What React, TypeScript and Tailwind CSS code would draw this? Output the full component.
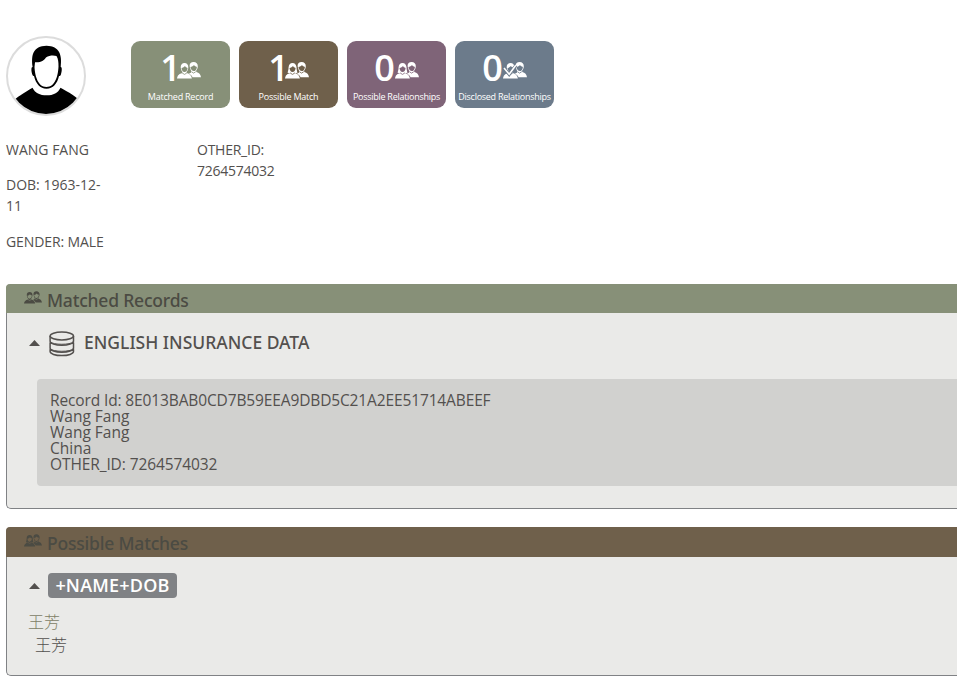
type PeopleProps = { className: string; variant: 'male' | 'female' | 'plain' | 'check' };

function People({ className, variant }: PeopleProps) {
  return (
    <svg viewBox="0 0 24 17" className={className} fill="currentColor">
      <path d="M12.600 4C12.500 1.200 14.100 0 16.600 0c2.600 0 4.300 1.700 4.200 4.300-.1 2-.7 3.400-1.700 4.500l.2 1.200c2.900 1 4.200 2.100 4.700 5.200h-8.500c-.6-1.700-1.700-2.700-3.600-3.500l2.300-1.100.1-1.700c-.7-.7-1.200-2.400-1.700-4.900Z" />
      <path d="M13.400 5c1.600-.2 2.800-1 3.600-1.900.6 1 1.700 1.600 2.900 1.800-.2 2.500-1.500 4.200-3.100 4.200S13.900 7.700 13.400 5Z" className="fill-(--hole)" />
      <path d="M3.700 5.300C3.700 2.600 5.100 1 7.500 1s3.900 1.600 3.800 4.300c-.1 2-.7 3.500-1.700 4.500l.1 1.200c3.200 1 4.700 2.200 5.200 5.600H0c.5-3.400 2-4.600 5.300-5.600l.1-1.200C4.300 8.800 3.900 7.200 3.700 5.300Z" />
      {variant === 'female' || variant === 'plain' ? (
        <path d="M4 4.200c-.4 2.600-.9 4.800-1.400 6.500l2.500.5 1-1.200L5 5Zm7.200 0c.3 2.600.8 4.800 1.300 6.500l-2.500.5-1.100-1.200L10.100 5Z" />
      ) : null}
      <path d="M4.500 6c1.500-.2 2.700-1 3.400-1.900.5.9 1.500 1.500 2.700 1.800-.3 2.400-1.400 4.100-3.100 4.100S4.900 8.500 4.500 6Z" className="fill-(--hole)" />
      <path d="M5.200 11 7.500 12.400 9.800 11M14.600 9.800l1.900 1.300 2.300-1.400" fill="none" className="stroke-(--hole)" strokeWidth="0.8" />
      {variant === 'check' ? (
        <>
          <path d="m1 6.200 5.200 6.200 6.700-9" fill="none" className="stroke-(--hole)" strokeWidth="3.200" />
          <path d="m1 6 5.200 6.200 6.600-9" fill="none" stroke="currentColor" strokeWidth="1.600" />
        </>
      ) : null}
    </svg>
  );
}

function Avatar() {
  return (
    <svg viewBox="0 0 80 80" className="block h-20 w-20">
      <defs>
        <clipPath id="avatar-clip">
          <circle cx="40" cy="40" r="38" />
        </clipPath>
      </defs>
      <circle cx="40" cy="40" r="39" fill="#fff" stroke="#dcdcdc" strokeWidth="2" />
      <g clipPath="url(#avatar-clip)">
        <path d="M6 66c5-5 11-8.500 20.500-14.300C29 57 34 59.300 40.700 59.300S52 57 54.500 51.700C63 56.500 70 60 75 66v14H6Z" />
        <path d="M26.600 31C25.200 30.800 25 34.500 26.300 38.500c.4 1.300 1 1.500 1.700 1.500C29.800 47.500 34 52.700 40.500 52.700S51.300 47.500 53 40c1 0 1.500-.3 1.900-1.500C56.200 34.500 56 30.800 54.700 31c1.500-12-1-20.800-14.200-21.300C27 10 25 19 26.600 31Z" />
        <path d="M29 26.200c6 .4 8.800-1.500 11-4.700 3.500-2.200 7.500-2.500 10.500-1.400 1.800 3.200 2 5.900 2 10.400-.4 9.500-3.500 20.500-12 20.500S29 40 28.500 31Z" fill="#fff" />
      </g>
    </svg>
  );
}

function DatabaseIcon() {
  return (
    <svg viewBox="0 0 26 26" className="h-[26px] w-[26px]" fill="none" stroke="#53504e" strokeWidth="1.500">
      <ellipse cx="12.800" cy="5" rx="11.700" ry="4" />
      <path d="M1.100 5v5.300c0 2.300 5.200 4 11.700 4s11.700-1.700 11.700-4V5M1.100 11.500v5.700c0 2.300 5.200 4 11.700 4s11.700-1.700 11.700-4v-5.700M1.100 18.200v2.400c0 2.300 5.200 4 11.700 4s11.700-1.700 11.700-4v-2.400" />
      <path d="M1.500 10.800c2 3.300 20.600 3.300 22.600 0M1.500 17.800c2 3.300 20.600 3.300 22.600 0" strokeWidth="1" />
    </svg>
  );
}

function Caret() {
  return (
    <svg viewBox="0 0 11 6" className="h-1.5 w-[11px]" fill="#53504e">
      <path d="M0 6 5.500 0 11 6Z" />
    </svg>
  );
}

const stats = [
  { count: 1, label: 'Matched Record', variant: 'male', tone: 'bg-[#879078] [--hole:#879078]', num: 'tracking-[-4px]', tracking: 'tracking-[-0.23px]' },
  { count: 1, label: 'Possible Match', variant: 'female', tone: 'bg-[#6f604b] [--hole:#6f604b]', num: 'tracking-[-4px]', tracking: 'tracking-[-0.23px]' },
  { count: 0, label: 'Possible Relationships', variant: 'plain', tone: 'bg-[#7f6478] [--hole:#7f6478]', num: 'tracking-[0px]', tracking: 'tracking-[-0.27px]' },
  { count: 0, label: 'Disclosed Relationships', variant: 'check', tone: 'bg-[#6c7b8b] [--hole:#6c7b8b]', num: 'tracking-[0px]', tracking: 'tracking-[-0.26px]' },
] as const;

export default function App() {
  return (
    <div className="h-[685px] w-[957px] overflow-hidden bg-white pl-1.5 font-['Open_Sans','Noto_Sans_CJK_SC',sans-serif] text-[#53504e]">
      <header className="flex items-start pt-9">
        <Avatar />
        <div className="mt-[5px] ml-[45px] flex gap-[9px]">
          {stats.map((s) => (
            <div key={s.label} className={`flex h-[67px] w-[99px] flex-col items-center rounded-[9px] text-white ${s.tone}`}>
              <div className="flex h-[50px] items-start">
                <span className={`mt-1 text-[36px] leading-[46px] font-semibold ${s.num}`}>{s.count}</span>
                <People variant={s.variant} className="mt-[21px] h-[17px] w-6" />
              </div>
              <span className={`text-[9px] leading-3 whitespace-nowrap ${s.tracking}`}>{s.label}</span>
            </div>
          ))}
        </div>
      </header>

      <section className="mt-[23px] mb-px flex h-[144px] text-[14px] leading-[21px]">
        <div className="flex w-[191px] flex-col gap-[15px]">
          <p className="whitespace-nowrap">WANG FANG</p>
          <p className="-mt-px">DOB: 1963-12-<br />11</p>
          <p className="tracking-[-0.1px]">GENDER: MALE</p>
        </div>
        <p className="tracking-[-0.25px]">OTHER_ID:<br />7264574032</p>
      </section>

      <section className="h-[225px] rounded-l-[5px] border-b border-l border-[#808285] bg-[#eaeae8]">
        <h2 className="-ml-px flex h-[29px] items-start rounded-tl-[4px] bg-[#879078] pl-[18px] font-['Noto_Sans',sans-serif] text-[17.500px] leading-[33px] font-medium text-[#4b4b43] [--hole:#879078]">
          <People variant="male" className="mt-[7px] mr-[5px] h-[13px] w-[18px]" />
          <span className="tracking-[-0.2px]">Matched Records</span>
        </h2>
        <div className="mt-[18px] flex h-[26px] items-center pl-[22px]">
          <span className="-mt-[3px]"><Caret /></span>
          <span className="ml-[9px]"><DatabaseIcon /></span>
          <h3 className="-mt-[4px] ml-[9px] font-['Noto_Sans',sans-serif] text-[17.500px] leading-6 font-medium">ENGLISH INSURANCE DATA</h3>
        </div>
        <div className="mt-[22px] ml-[30px] h-[107px] rounded-l-[4px] bg-[#d1d1cf] pt-[13px] pl-[13px] text-[15.500px] leading-4">
          <p className="tracking-[-0.13px]">Record Id: 8E013BAB0CD7B59EEA9DBD5C21A2EE51714ABEEF</p>
          <p>Wang Fang</p>
          <p>Wang Fang</p>
          <p>China</p>
          <p className="tracking-[-0.1px]">OTHER_ID: 7264574032</p>
        </div>
      </section>

      <section className="mt-[18px] h-[149px] rounded-l-[5px] border-b border-l border-[#808285] bg-[#eaeae8]">
        <h2 className="-ml-px flex h-[30px] items-start rounded-tl-[4px] bg-[#6f604b] pl-[18px] font-['Noto_Sans',sans-serif] text-[17.500px] leading-[33px] font-medium text-[#4b4b43] [--hole:#6f604b]">
          <People variant="female" className="mt-[7px] mr-[5px] h-[13px] w-[18px]" />
          <span className="tracking-[-0.2px]">Possible Matches</span>
        </h2>
        <div className="mt-4 flex h-[25px] items-center pl-[22px]">
          <Caret />
          <span className="ml-2 flex h-[25px] w-[129px] items-center justify-center rounded-[4px] bg-[#808285] text-[18px] font-semibold tracking-[0.2px] text-white">+NAME+DOB</span>
        </div>
        <div className="mt-3 ml-[21px] font-['Noto_Sans_CJK_SC',sans-serif] text-[16px] leading-[23px] font-light">
          <p className="text-[#808066]">王芳</p>
          <p className="pl-[7px]">王芳</p>
        </div>
      </section>
    </div>
  );
}
